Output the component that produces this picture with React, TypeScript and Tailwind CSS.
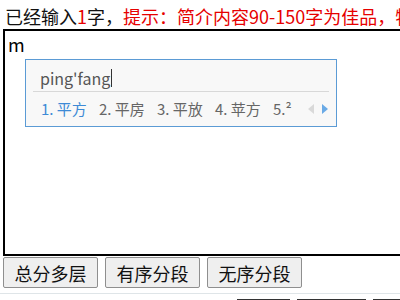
import React from "react";

const cjk = { fontFamily: '"Microsoft YaHei", "Noto Sans CJK SC", "Liberation Sans", sans-serif' };

function ImeBox() {
  const cands = ["平方", "平房", "平放", "苹方"];
  return (
    <div className="absolute left-[20px] top-[28px] w-[312px] h-[68px] border border-[#5b9bd5] bg-[#f8f8f8]">
      <div className="h-[31px] pl-[14px] pt-[5px] text-[16px] leading-[20px] text-[#555] flex items-center" style={cjk}>
        <span>ping'fang</span>
        <span className="ml-[1px] w-px h-[18px] bg-[#333]" />
      </div>
      <div className="mx-[7px] border-t border-[#d8d8d8]" />
      <div className="flex items-center h-[34px] pl-[15px] text-[15px] text-[#666]" style={cjk}>
        {cands.map((c, i) => (
          <span key={c} className={`w-[58px] shrink-0 ${i === 0 ? "text-[#3d8ad6]" : ""}`}>
            {i + 1}. {c}
          </span>
        ))}
        <span className="w-[30px] shrink-0">5.²</span>
        <svg width="6" height="10" viewBox="0 0 6 10" className="ml-[5px]">
          <path d="M6 0 L0 5 L6 10 Z" fill="#d9d9d9" />
        </svg>
        <svg width="6" height="10" viewBox="0 0 6 10" className="ml-[8px]">
          <path d="M0 0 L6 5 L0 10 Z" fill="#6aaae6" />
        </svg>
      </div>
    </div>
  );
}

export default function App() {
  const buttons = ["总分多层", "有序分段", "无序分段"];
  return (
    <div className="w-[400px] h-[300px] overflow-hidden bg-white" style={cjk}>
      <p className="h-[29px] pl-[5px] pt-[5px] text-[18px] leading-[22px] whitespace-nowrap text-[#111]">
        已经输入<span className="text-[#e60000]">1</span>字，
        <span className="text-[#e60000]">提示：简介内容90-150字为佳品，特</span>
      </p>
      <div className="relative ml-[3px] w-[420px] h-[227px] border-2 border-r-0 border-black">
        <div className="pl-[3px] pt-[2px] text-[18px] leading-[22px] text-black">m</div>
        <ImeBox />
      </div>
      <div className="flex gap-[7px] pl-[3px] pt-[1px]">
        {buttons.map((b) => (
          <button
            key={b}
            className="w-[95px] h-[31px] rounded-[2px] border border-[#8f8f8f] bg-[#efefef] text-[18px] leading-[22px] text-[#111]"
            style={cjk}
          >
            {b}
          </button>
        ))}
      </div>
      <div className="mt-[5px] border-t border-[#dfe5e8]" />
      <div className="flex gap-[7px] pl-[237px] pt-[5px]">
        <div className="w-[58px] h-[6px] border-t border-[#333]" />
        <div className="w-[76px] h-[6px] border-t border-[#333]" />
        <div className="w-[30px] h-[6px] border-t border-[#333]" />
      </div>
    </div>
  );
}
